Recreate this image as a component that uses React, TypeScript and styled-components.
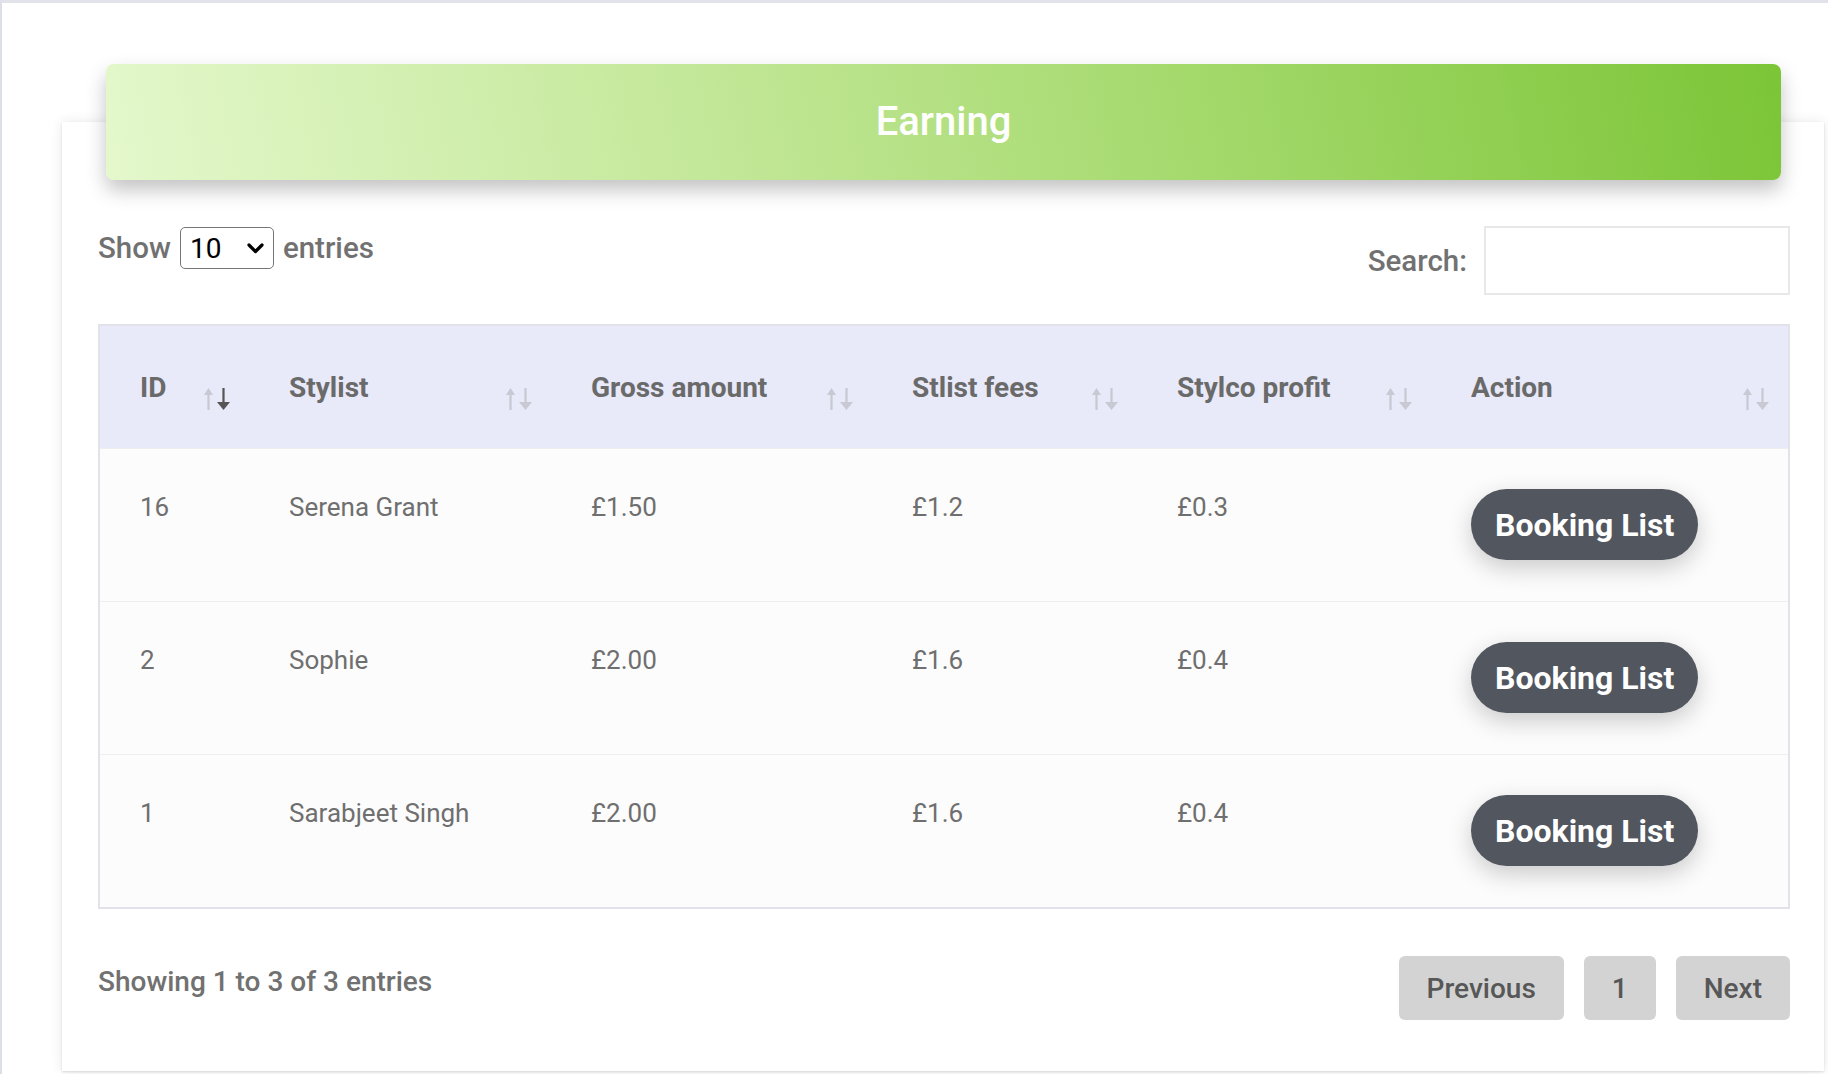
import React from "react";
import styled, { createGlobalStyle } from "styled-components";

const GlobalStyle = createGlobalStyle`
  html, body { margin: 0; padding: 0; background: #ffffff; }
  body { font-family: Roboto, "Liberation Sans", Arial, sans-serif; }
  * { box-sizing: border-box; }
`;

const Page = styled.div`
  width: 1828px;
  min-height: 1074px;
  border-top: 3px solid #e0e3ea;
  border-left: 2px solid #dddfe8;
  padding: 119px 4px 3px 60px;
  background: #ffffff;
`;

const Card = styled.section`
  display: flow-root;
  background: #ffffff;
  box-shadow: 0 0 12px rgba(0, 0, 0, 0.09), 0 1px 2px rgba(0, 0, 0, 0.12);
  padding: 0 34px 51px 36px;
`;

const TitleBar = styled.h1`
  margin: -58px 9px 0 8px;
  height: 116px;
  line-height: 116px;
  border-radius: 8px;
  background: linear-gradient(78deg, #e4f8cc 0%, #c4e89a 35%, #a4d96c 65%, #7cc537 100%);
  box-shadow: 0 10px 20px rgba(0, 0, 0, 0.24);
  color: #ffffff;
  text-align: center;
  font-size: 40px;
  font-weight: 500;
`;

const Controls = styled.div`
  margin-top: 46px;
  display: flex;
  justify-content: space-between;
  align-items: flex-start;
`;

const LengthLabel = styled.label`
  margin-top: 1px;
  display: flex;
  align-items: center;
  gap: 9px;
  font-size: 29.5px;
  font-weight: 500;
  color: #717171;
`;

const SelectBox = styled.span`
  display: flex;
  align-items: center;
  width: 94px;
  height: 42px;
  border: 1px solid #767676;
  border-radius: 5px;
  background: #ffffff;
  padding: 0 9px 0 0;
`;

const LengthSelect = styled.select`
  appearance: none;
  -webkit-appearance: none;
  flex: 1;
  min-width: 0;
  height: 100%;
  border: none;
  outline: none;
  background: transparent;
  color: #000000;
  font-family: Roboto, "Liberation Sans", Arial, sans-serif;
  font-size: 28px;
  padding: 0 0 0 9px;
`;

const Chevron = styled.svg`
  flex: none;
`;

const SearchLabel = styled.label`
  display: flex;
  align-items: center;
  gap: 17px;
  font-size: 29.5px;
  font-weight: 500;
  color: #717171;
`;

const SearchInput = styled.input`
  width: 306px;
  height: 69px;
  border: 2px solid #e8e8e8;
  background: #ffffff;
  outline: none;
  font-size: 26px;
`;

const Table = styled.table`
  margin-top: 29px;
  width: 100%;
  table-layout: fixed;
  border-collapse: separate;
  border-spacing: 0;
  border: 2px solid #e2e3ea;
`;

const HeadCell = styled.th`
  height: 122px;
  padding: 0 19px 0 40px;
  background: #e8e9f9;
  text-align: left;
  font-size: 28px;
  font-weight: 700;
  color: #6a6a6a;
`;

const HeadInner = styled.div`
  display: flex;
  justify-content: space-between;
  align-items: center;
`;

const SortSvg = styled.svg`
  flex: none;
  margin-top: 23px;
`;

const Row = styled.tr`
  background: #fcfcfc;
`;

const Cell = styled.td`
  padding: 40px 19px 41px 40px;
  vertical-align: top;
  border-top: 1px solid #eeeeee;
  font-size: 26px;
  line-height: 36px;
  font-weight: 400;
  color: #6f6f6f;
`;

const BookingButton = styled.button`
  height: 71px;
  padding: 0 24px;
  border: none;
  border-radius: 36px;
  background: #52565f;
  color: #ffffff;
  font-family: Roboto, "Liberation Sans", Arial, sans-serif;
  font-size: 32px;
  font-weight: 700;
  box-shadow: 0 8px 24px rgba(0, 0, 0, 0.2);
  cursor: pointer;
`;

const Footer = styled.div`
  margin-top: 47px;
  display: flex;
  justify-content: space-between;
  align-items: flex-start;
`;

const Info = styled.div`
  margin-top: 6px;
  font-size: 28px;
  line-height: 40px;
  font-weight: 500;
  color: #717171;
`;

const Pager = styled.div`
  display: flex;
  gap: 20px;
`;

const PageButton = styled.button`
  height: 64px;
  padding: 0 28px;
  border: none;
  border-radius: 6px;
  background: #d3d3d3;
  color: #575757;
  font-family: Roboto, "Liberation Sans", Arial, sans-serif;
  font-size: 28px;
  font-weight: 500;
`;

const SortIcon: React.FC<{ active?: boolean }> = ({ active }) => (
  <SortSvg width="26" height="24" viewBox="0 0 26 24">
    <path d="M4.5 1 L9 8 H5.6 V23 H3.4 V8 H0 Z" fill="#c8c9d3" />
    <path d="M19.5 23 L13 15 H18.4 V1 H20.6 V15 H26 Z" fill={active ? "#555555" : "#c8c9d3"} />
  </SortSvg>
);

const columns = [
  { title: "ID", width: 149 },
  { title: "Stylist", width: 302 },
  { title: "Gross amount", width: 321 },
  { title: "Stlist fees", width: 265 },
  { title: "Stylco profit", width: 294 },
  { title: "Action", width: undefined as number | undefined },
];

const rows = [
  { id: "16", stylist: "Serena Grant", gross: "£1.50", fees: "£1.2", profit: "£0.3" },
  { id: "2", stylist: "Sophie", gross: "£2.00", fees: "£1.6", profit: "£0.4" },
  { id: "1", stylist: "Sarabjeet Singh", gross: "£2.00", fees: "£1.6", profit: "£0.4" },
];

export default function App() {
  return (
    <>
      <GlobalStyle />
      <Page>
        <Card>
          <TitleBar>Earning</TitleBar>
          <Controls>
            <LengthLabel>
              Show
              <SelectBox>
                <LengthSelect defaultValue="10">
                  <option value="10">10</option>
                  <option value="25">25</option>
                  <option value="50">50</option>
                  <option value="100">100</option>
                </LengthSelect>
                <Chevron width="17" height="11" viewBox="0 0 17 11">
                  <path d="M2 2 L8.5 8.5 L15 2" fill="none" stroke="#000000" strokeWidth="3.2" strokeLinecap="round" strokeLinejoin="round" />
                </Chevron>
              </SelectBox>
              entries
            </LengthLabel>
            <SearchLabel>
              Search:
              <SearchInput type="search" />
            </SearchLabel>
          </Controls>
          <Table>
            <colgroup>
              {columns.map((c) => (
                <col key={c.title} style={c.width ? { width: c.width } : undefined} />
              ))}
            </colgroup>
            <thead>
              <tr>
                {columns.map((c, i) => (
                  <HeadCell key={c.title}>
                    <HeadInner>
                      <span>{c.title}</span>
                      <SortIcon active={i === 0} />
                    </HeadInner>
                  </HeadCell>
                ))}
              </tr>
            </thead>
            <tbody>
              {rows.map((r) => (
                <Row key={r.id}>
                  <Cell>{r.id}</Cell>
                  <Cell>{r.stylist}</Cell>
                  <Cell>{r.gross}</Cell>
                  <Cell>{r.fees}</Cell>
                  <Cell>{r.profit}</Cell>
                  <Cell>
                    <BookingButton>Booking List</BookingButton>
                  </Cell>
                </Row>
              ))}
            </tbody>
          </Table>
          <Footer>
            <Info>Showing 1 to 3 of 3 entries</Info>
            <Pager>
              <PageButton>Previous</PageButton>
              <PageButton>1</PageButton>
              <PageButton>Next</PageButton>
            </Pager>
          </Footer>
        </Card>
      </Page>
    </>
  );
}
